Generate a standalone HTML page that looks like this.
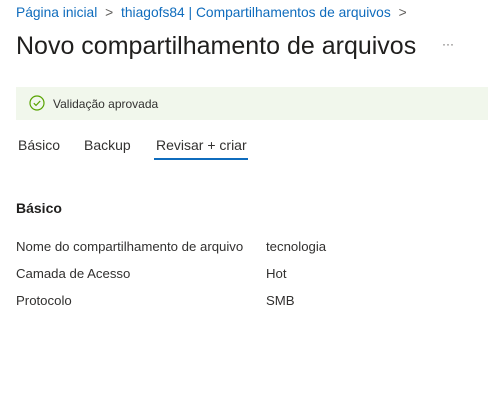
<!DOCTYPE html>
<html><head><meta charset="utf-8"><style>
body{margin:0;width:488px;height:406px;background:#fff;font-family:"Liberation Sans",sans-serif;position:relative;overflow:hidden;color:#323130}
.a{position:absolute;white-space:nowrap}
</style></head><body>
<div class="a" style="left:16px;top:5px;font-size:13.8px;color:#0f6cbd">Página inicial <span style="color:#605e5c;margin:0 4px">&gt;</span> thiagofs84 | Compartilhamentos de arquivos <span style="color:#605e5c;margin-left:4px">&gt;</span></div>
<div class="a" style="left:16px;top:32px;font-size:25px;color:#201f1e">Novo compartilhamento de arquivos</div>
<div class="a" style="left:442px;top:37px;font-size:12px;color:#605e5c">···</div>
<div class="a" style="left:16px;top:87px;width:472px;height:33px;background:#f1f7ec"></div>
<svg class="a" style="left:29px;top:95px" width="16" height="16" viewBox="0 0 16 16"><circle cx="8" cy="8" r="7" fill="none" stroke="#57a300" stroke-width="1.2"/><path d="M4.8 8.2l2.2 2.2 4.2-4.4" fill="none" stroke="#57a300" stroke-width="1.2"/></svg>
<div class="a" style="left:53px;top:97px;font-size:12px;color:#323130">Validação aprovada</div>
<div class="a" style="left:18px;top:137px;font-size:14px">Básico</div>
<div class="a" style="left:84px;top:137px;font-size:14px">Backup</div>
<div class="a" style="left:156px;top:137px;font-size:14px">Revisar + criar</div>
<div class="a" style="left:154px;top:158px;width:94px;height:2px;background:#0f6cbd"></div>
<div class="a" style="left:16px;top:200px;font-size:14px;font-weight:bold;color:#201f1e">Básico</div>
<div class="a" style="left:16px;top:239px;font-size:13.2px">Nome do compartilhamento de arquivo</div>
<div class="a" style="left:266px;top:239px;font-size:13.2px">tecnologia</div>
<div class="a" style="left:16px;top:266px;font-size:13.2px">Camada de Acesso</div>
<div class="a" style="left:266px;top:266px;font-size:13.2px">Hot</div>
<div class="a" style="left:16px;top:293px;font-size:13.2px">Protocolo</div>
<div class="a" style="left:266px;top:293px;font-size:13.2px">SMB</div>
</body></html>
